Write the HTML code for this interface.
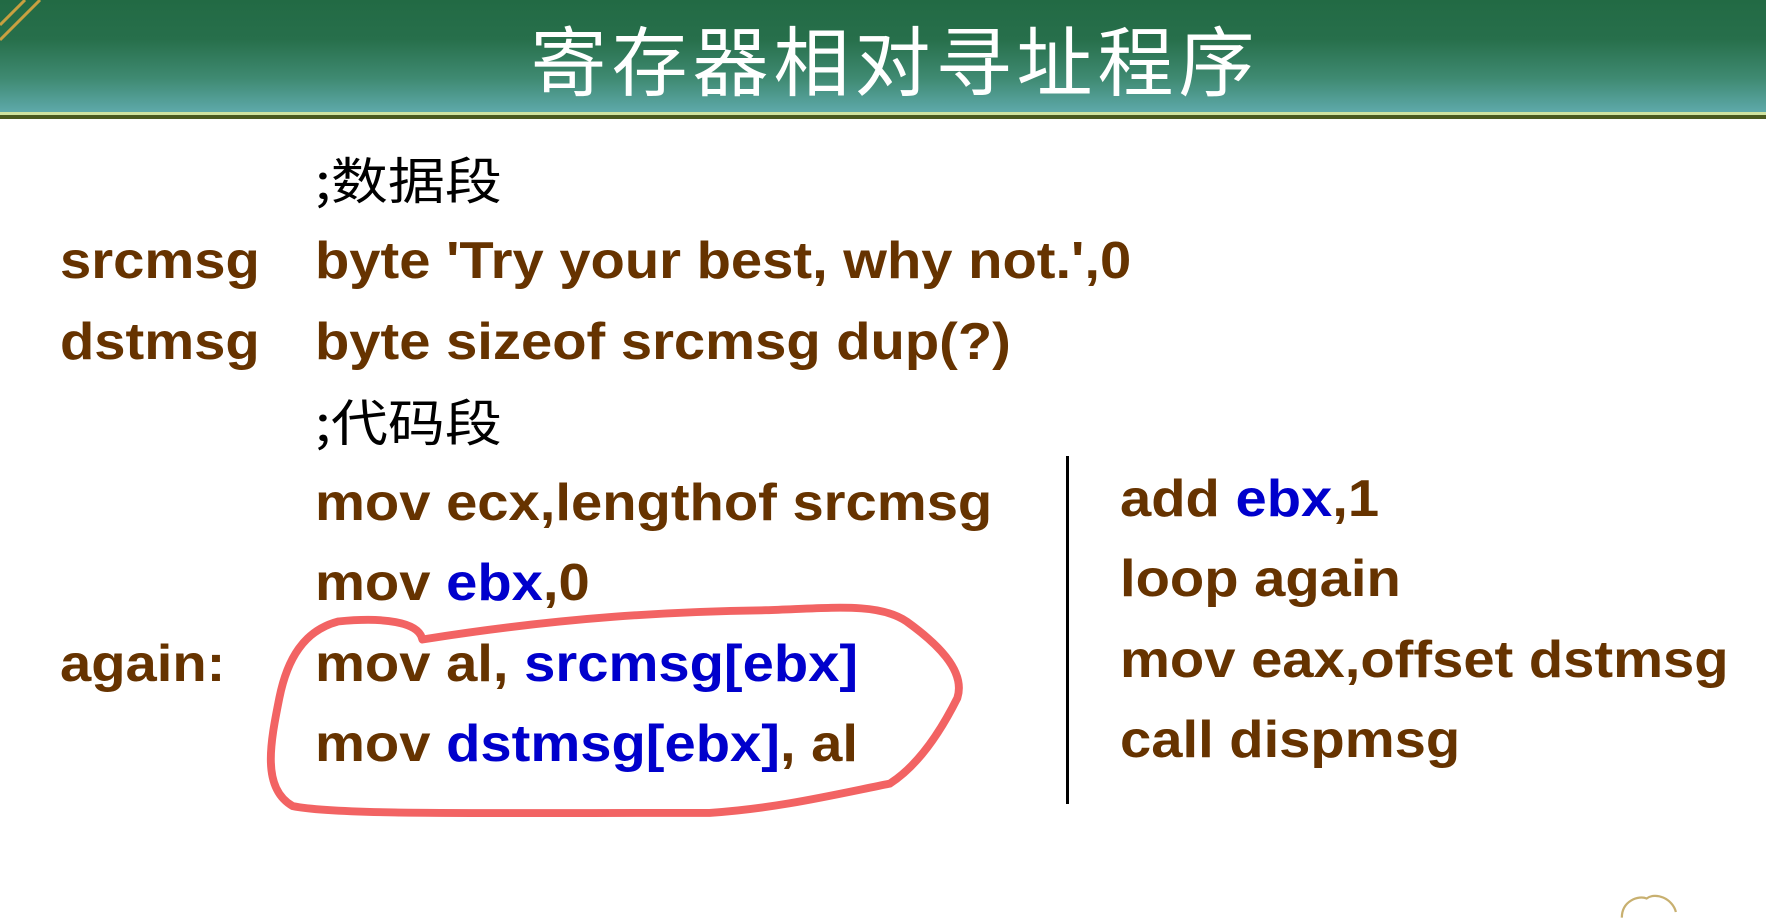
<!DOCTYPE html>
<html><head><meta charset="utf-8"><style>
body{margin:0;width:1766px;height:921px;overflow:hidden;background:#fff;position:relative;font-family:"Liberation Sans","Noto Sans CJK SC",sans-serif;}
.hdr{position:absolute;left:0;top:0;width:1766px;height:112px;background:linear-gradient(#226a44 0%,#276f4b 35%,#3f8a72 70%,#5ea9aa 100%);}
.l1{position:absolute;left:0;top:112px;width:1766px;height:3px;background:#cfe3a0;}
.l2{position:absolute;left:0;top:115px;width:1766px;height:4px;background:#4a5a20;}
.title{position:absolute;left:12px;width:1766px;top:12px;text-align:center;color:#fff;font-size:76px;line-height:90px;font-family:"Noto Sans CJK SC",sans-serif;letter-spacing:5px;}
.t{position:absolute;height:80px;line-height:80px;font-size:52px;font-weight:bold;color:#663300;white-space:nowrap;transform:scaleX(1.08);transform-origin:0 50%;}
.c{color:#000;font-weight:normal;font-family:"Noto Sans CJK SC",sans-serif;font-size:50px;transform:scaleX(1.14);}
.b{color:#0000cc;}
.vl{position:absolute;left:1066px;top:456px;width:3px;height:348px;background:#000;}
</style></head><body>
<div class="hdr"></div><div class="l1"></div><div class="l2"></div>
<svg style="position:absolute;left:0;top:0" width="60" height="50"><path d="M0 40 L40 0 M0 25 L25 0 M10 30 L30 10" stroke="#c8a040" stroke-width="3" fill="none"/></svg>
<div class="title">寄存器相对寻址程序</div>
<div class="t c" style="left:315px;top:138px">;数据段</div>
<div class="t" style="left:60px;top:221px">srcmsg</div>
<div class="t" style="left:315px;top:221px">byte 'Try your best, why not.',0</div>
<div class="t" style="left:60px;top:302px">dstmsg</div>
<div class="t" style="left:315px;top:302px">byte sizeof srcmsg dup(?)</div>
<div class="t c" style="left:315px;top:380px">;代码段</div>
<div class="t" style="left:315px;top:463px">mov ecx,lengthof srcmsg</div>
<div class="t" style="left:315px;top:543px">mov <span class="b">ebx</span>,0</div>
<div class="t" style="left:60px;top:624px">again:</div>
<div class="t" style="left:315px;top:624px">mov al, <span class="b">srcmsg[ebx]</span></div>
<div class="t" style="left:315px;top:704px">mov <span class="b">dstmsg[ebx]</span>, al</div>
<div class="vl"></div>
<div class="t" style="left:1120px;top:459px">add <span class="b">ebx</span>,1</div>
<div class="t" style="left:1120px;top:539px">loop again</div>
<div class="t" style="left:1120px;top:620px">mov eax,offset dstmsg</div>
<div class="t" style="left:1120px;top:700px">call dispmsg</div>
<svg style="position:absolute;left:0;top:0" width="1766" height="921" viewBox="0 0 1568 818" preserveAspectRatio="none">
<path d="M375 568 C372 552 340 548 300 552 C270 560 255 585 248 620 C240 660 232 700 260 716 C300 724 420 722 630 722 C690 718 740 706 790 696 C815 680 835 650 850 620 C858 595 830 570 805 552 C780 535 740 540 680 542 C600 543 500 548 375 568" stroke="#f26363" stroke-width="7" fill="none" stroke-linecap="round"/>
<path d="M1440 815 C1440 800 1455 795 1462 798 C1470 792 1485 798 1488 810" stroke="#c8b070" stroke-width="2" fill="none"/>
</svg>
</body></html>
